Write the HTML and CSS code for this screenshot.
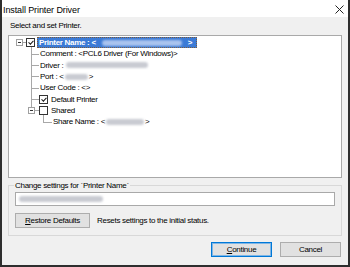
FILE: index.html
```html
<!DOCTYPE html>
<html lang="en">
<head>
  <meta charset="UTF-8">
  <title>Install Printer Driver</title>
  <link rel="stylesheet" href="styles.css">
</head>
<body>
  <div class="window">
    <div class="titlebar">
      <span class="title">Install Printer Driver</span>
      <svg class="close" width="9" height="9" viewBox="0 0 9 9">
        <path d="M0.5 0.5 L8.5 8.5 M8.5 0.5 L0.5 8.5" stroke="#222" stroke-width="1" fill="none"/>
      </svg>
    </div>

    <div class="content">
      <div class="intro">Select and set Printer.</div>

      <div class="tree">
        <ul class="root">
          <li>
            <div class="node">
              <span class="exp"></span><span class="dash"></span><span class="chk on"></span>
              <span class="sel">Printer Name : &lt;<span class="blur blue"></span>&gt;</span>
            </div>
            <ul class="kids">
              <li><div class="node">Comment : &lt;PCL6 Driver (For Windows)&gt;</div></li>
              <li><div class="node">Driver : <span class="blur drv"></span></div></li>
              <li><div class="node">Port : &lt;<span class="blur port"></span>&gt;</div></li>
              <li><div class="node">User Code : &lt;&gt;</div></li>
              <li><div class="node"><span class="chk on first"></span>Default Printer</div></li>
              <li>
                <div class="node"><span class="exp inner"></span><span class="dash"></span><span class="chk"></span>Shared</div>
                <ul class="kids sub">
                  <li><div class="node">Share Name : &lt;<span class="blur share"></span>&gt;</div></li>
                </ul>
              </li>
            </ul>
          </li>
        </ul>
      </div>

      <fieldset class="group">
        <legend>Change settings for `Printer Name`</legend>
        <div class="field"><span class="blur val"></span></div>
        <div class="restore-row">
          <button class="btn restore"><u>R</u>estore Defaults</button>
          <span>Resets settings to the initial status.</span>
        </div>
      </fieldset>

      <div class="footer">
        <button class="btn default"><u>C</u>ontinue</button>
        <button class="btn">Cancel</button>
      </div>
    </div>
  </div>
</body>
</html>
```

FILE: styles.css
```css
body {
  margin: 0;
  font-family: 'Liberation Sans', Arial, sans-serif;
  font-size: 8px;
  letter-spacing: -0.3px;
  color: #000;
}
.window {
  width: 350px;
  height: 267px;
  box-sizing: border-box;
  border: 2px solid #2e2e2e;
  border-top: none;
  background-color: #f0f0f0;
  display: flex;
  flex-direction: column;
}
.titlebar {
  height: 17px;
  box-sizing: border-box;
  background-color: #fff;
  display: flex;
  align-items: center;
  justify-content: space-between;
  padding: 0 4px 0 1px;
}
.title {
  font-size: 9px;
  letter-spacing: -0.1px;
  margin-top: 2px;
}
.close {
  margin-top: 1px;
}
.content {
  padding: 0 6px;
  display: flex;
  flex-direction: column;
}
.intro {
  height: 18px;
  line-height: 18px;
  padding-left: 2px;
}

/* tree view */
.tree {
  height: 143px;
  box-sizing: border-box;
  background-color: #fff;
  border: 1px solid #a9a9a9;
  padding-top: 1px;
}
.tree ul {
  list-style: none;
  margin: 0;
  padding: 0;
}
.root {
  padding-left: 7px !important;
}
.node {
  height: 11.3px;
  display: flex;
  align-items: center;
  white-space: nowrap;
}
.exp {
  width: 7px;
  height: 7px;
  box-sizing: border-box;
  border: 1px solid #a0a0a0;
  background-color: #fff;
  position: relative;
  z-index: 1;
  flex: none;
}
.exp::after {
  content: "";
  position: absolute;
  left: 1px;
  right: 1px;
  top: 2px;
  border-top: 1px solid #333;
}
.exp.inner {
  margin-left: -12px;
}
.dash {
  width: 3px;
  border-top: 1px solid #a0a0a0;
  flex: none;
}
.exp.inner + .dash {
  width: 4px;
}
.chk {
  width: 9px;
  height: 9px;
  box-sizing: border-box;
  border: 1px solid #333;
  background-color: #fff;
  margin-right: 3px;
  position: relative;
  z-index: 1;
  flex: none;
}
.chk.on::after {
  content: "";
  position: absolute;
  left: 1px;
  top: 0px;
  width: 4px;
  height: 2px;
  border-left: 1.7px solid #111;
  border-bottom: 1.7px solid #111;
  transform: translate(0.5px, 1.5px) rotate(-48deg);
}
.chk.first {
  margin-left: -1px;
}
.sel {
  margin-left: -1px;
  width: 160px;
  height: 11px;
  box-sizing: border-box;
  background-color: #3b7ad6;
  border: 1px dotted #7a5a3a;
  color: #fff;
  font-weight: bold;
  display: flex;
  align-items: center;
  padding-left: 1px;
}
.kids {
  margin-left: 15px !important;
}
.kids > li {
  position: relative;
  padding-left: 9px;
}
.kids > li::before {
  content: "";
  position: absolute;
  left: 0;
  top: -6px;
  width: 7px;
  height: 11.6px;
  border-left: 1px solid #a8a8a8;
  border-bottom: 1px solid #a8a8a8;
}
.kids.sub {
  margin-left: 3px !important;
}
.kids.sub > li {
  padding-left: 10px;
}
.kids.sub > li::before {
  width: 8px;
}

/* blurred values */
.blur {
  display: inline-block;
  height: 6px;
  border-radius: 3px;
  background-color: #c9cbd2;
  filter: blur(1.2px);
  margin: 0 1px;
}
.blur.blue {
  width: 80px;
  background-color: #a9c3ee;
  margin-left: 6px;
  margin-right: 6px;
}
.blur.drv {
  width: 82px;
  margin-left: 3px;
}
.blur.port {
  width: 23px;
}
.blur.share {
  width: 38px;
}
.blur.val {
  width: 84px;
  margin-left: 3px;
}

/* group box */
.group {
  margin: 3px 0 0 0;
  padding: 1px 6px 7px 6px;
  border: 1px solid #d8d8d8;
  min-width: 0;
}
.group legend {
  padding: 0 1px;
  margin-left: -1px;
}
.field {
  height: 14px;
  box-sizing: border-box;
  background-color: #fff;
  border: 1px solid #a9a9a9;
  display: flex;
  align-items: center;
  margin-top: 1px;
}
.restore-row {
  display: flex;
  align-items: center;
  gap: 7px;
  margin-top: 7px;
}
.btn {
  font-family: inherit;
  font-size: 8px;
  letter-spacing: -0.3px;
  height: 15px;
  box-sizing: border-box;
  background-color: #e1e1e1;
  border: 1px solid #adadad;
  padding: 0;
  color: #000;
}
.btn.restore {
  width: 75px;
}
.footer {
  display: flex;
  justify-content: flex-end;
  gap: 8px;
  margin-top: 6px;
  padding-right: 1px;
}
.footer .btn {
  width: 61px;
}
.btn.default {
  border-color: #0078d7;
  box-shadow: inset 0 0 0 1px #7fb6e6;
}
```
